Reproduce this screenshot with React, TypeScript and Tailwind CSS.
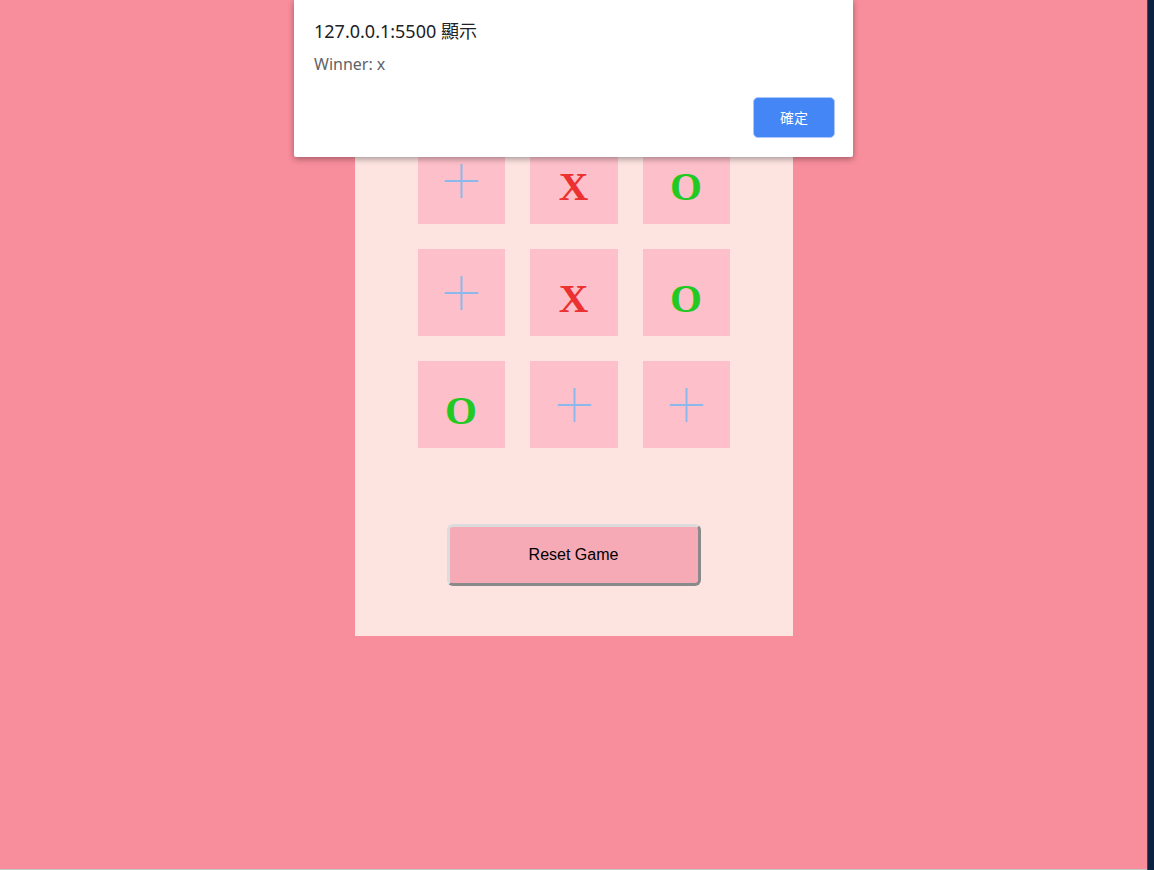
import React from "react";

type Mark = "x" | "o" | "";

const board: Mark[] = ["", "x", "o", "", "x", "o", "o", "", ""];

function Cell({ mark }: { mark: Mark }) {
  return (
    <div className="flex h-[87px] items-center justify-center bg-[#fdbfc9]">
      {mark === "" ? (
        <svg width="34" height="34" viewBox="0 0 34 34" className="translate-x-[0.5px]">
          <rect x="16" y="0" width="2" height="34" fill="#8bb9ec" />
          <rect x="0" y="16" width="34" height="2" fill="#8bb9ec" />
        </svg>
      ) : (
        <span
          className={`pt-[11px] font-['Liberation_Serif',serif] text-[41px] font-bold leading-none ${
            mark === "x" ? "text-[#ec3131]" : "text-[#22c922]"
          }`}
        >
          {mark.toUpperCase()}
        </span>
      )}
    </div>
  );
}

export default function App() {
  return (
    <div className="relative flex h-[870px] w-full overflow-hidden font-['Liberation_Sans',sans-serif]">
      <div className="flex flex-1 flex-col">
        <div className="flex flex-1 justify-center bg-[#f88d9b]">
          <div className="flex h-[636px] w-[438px] flex-col items-center bg-[#fde4e1] pt-[137px]">
            <div className="grid grid-cols-[87px_88px_87px] gap-x-[25px] gap-y-[25px]">
              {board.map((m, i) => (
                <Cell key={i} mark={m} />
              ))}
            </div>
            <button className="mt-[76px] h-[62px] w-[254px] rounded-[6px] border-[3px] border-t-[#dcdcdc] border-l-[#dcdcdc] border-r-[#8a8a8a] border-b-[#8a8a8a] bg-[#f5aab5] text-[16px] text-black">
              Reset Game
            </button>
          </div>
        </div>
        <div className="h-px bg-[#c4c4c4]" />
      </div>
      <div className="w-[7px] border-l border-l-[#1d4f80] bg-[#0b2340]" />

      {/* alert dialog */}
      <div className="absolute left-[294px] top-0 w-[559px] rounded-b-[2px] bg-white pb-[19px] pl-[20px] pr-[18px] pt-[18px] shadow-[0_2px_6px_rgba(0,0,0,0.35)] font-['Noto_Sans','Noto_Sans_CJK_TC',sans-serif]">
        <div className="text-[18px] leading-[26px] text-[#202124]">127.0.0.1:5500 顯示</div>
        <div className="mt-[9px] text-[16px] leading-[22px] text-[#5f6368]">Winner: x</div>
        <div className="mt-[22px] flex justify-end">
          <button className="h-[41px] w-[82px] rounded-[5px] border border-[#aac8fa] bg-[#4486f5] text-[14px] text-white font-['Noto_Sans_CJK_TC',sans-serif]">
            確定
          </button>
        </div>
      </div>
    </div>
  );
}
